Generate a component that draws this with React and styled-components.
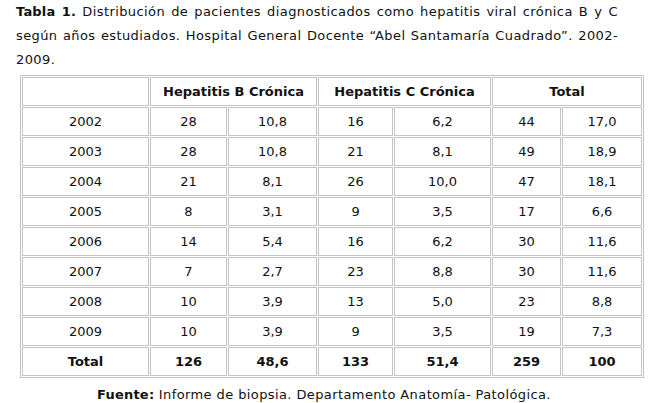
import React from "react";
import styled, { createGlobalStyle } from "styled-components";

const Global = createGlobalStyle`
  html, body { margin: 0; padding: 0; background: #ffffff; }
  body { font-family: "DejaVu Sans", Verdana, sans-serif; color: #111; }
`;

const Page = styled.div`
  display: flex;
  flex-direction: column;
  padding: 0 0 0 16px;
  width: 651px;
  box-sizing: border-box;
  font-size: 13px;
`;

const Caption = styled.div`
  width: 602px;
  line-height: 24px;
  letter-spacing: 0.4px;
`;

const Line = styled.span`
  display: block;
  text-align: ${(p) => (p.$justify ? "justify" : "left")};
  text-align-last: ${(p) => (p.$justify ? "justify" : "left")};
  white-space: nowrap;
`;

const Strong = styled.b`
  font-weight: bold;
  letter-spacing: 0.2px;
`;

const Table = styled.table`
  margin: 3px 0 0 4px;
  border: 1px solid #c4c4c4;
  border-spacing: 1px;
  border-collapse: separate;
  table-layout: fixed;
  width: 624px;
`;

const Cell = styled.td`
  border: 1px solid #c4c4c4;
  height: 29px;
  box-sizing: border-box;
  padding: 0;
  text-align: center;
  vertical-align: middle;
  font-size: 13px;
  font-weight: ${(p) => (p.$bold ? "bold" : "normal")};
  color: #111;
`;

const Footer = styled.div`
  margin-top: 5px;
  line-height: 24px;
  text-align: center;
  width: 616px;
  letter-spacing: 0.4px;
`;

const cols = [127, 77, 89, 75, 97, 69, 80];

const rows = [
  ["2002", "28", "10,8", "16", "6,2", "44", "17,0"],
  ["2003", "28", "10,8", "21", "8,1", "49", "18,9"],
  ["2004", "21", "8,1", "26", "10,0", "47", "18,1"],
  ["2005", "8", "3,1", "9", "3,5", "17", "6,6"],
  ["2006", "14", "5,4", "16", "6,2", "30", "11,6"],
  ["2007", "7", "2,7", "23", "8,8", "30", "11,6"],
  ["2008", "10", "3,9", "13", "5,0", "23", "8,8"],
  ["2009", "10", "3,9", "9", "3,5", "19", "7,3"],
];

const total = ["Total", "126", "48,6", "133", "51,4", "259", "100"];

export default function App() {
  return (
    <>
      <Global />
      <Page>
        <Caption>
          <Line $justify>
            <Strong>Tabla 1.</Strong> Distribución de pacientes diagnosticados como hepatitis viral crónica B y C
          </Line>
          <Line $justify>
            según años estudiados. Hospital General Docente “Abel Santamaría Cuadrado”. 2002-
          </Line>
          <Line>2009.</Line>
        </Caption>
        <Table>
          <colgroup>
            {cols.map((w, i) => (
              <col key={i} style={{ width: w }} />
            ))}
          </colgroup>
          <tbody>
            <tr>
              <Cell />
              <Cell colSpan={2} $bold>Hepatitis B Crónica</Cell>
              <Cell colSpan={2} $bold>Hepatitis C Crónica</Cell>
              <Cell colSpan={2} $bold>Total</Cell>
            </tr>
            {rows.map((r) => (
              <tr key={r[0]}>
                {r.map((v, i) => (
                  <Cell key={i}>{v}</Cell>
                ))}
              </tr>
            ))}
            <tr>
              {total.map((v, i) => (
                <Cell key={i} $bold>{v}</Cell>
              ))}
            </tr>
          </tbody>
        </Table>
        <Footer>
          <Strong>Fuente:</Strong> Informe de biopsia. Departamento Anatomía- Patológica.
        </Footer>
      </Page>
    </>
  );
}
